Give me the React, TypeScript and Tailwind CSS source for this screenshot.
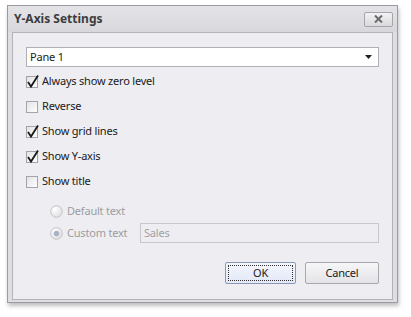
import React from "react";

const font = { fontFamily: '"Noto Sans", "Open Sans", Arial, sans-serif' };

const CheckBox: React.FC<{ checked?: boolean }> = ({ checked }) => (
  <svg width="14" height="16" viewBox="0 0 14 16" className="shrink-0 overflow-visible">
    <defs>
      <linearGradient id="cbg" x1="0" y1="0" x2="1" y2="1">
        <stop offset="0" stopColor="#e2e2e4" />
        <stop offset="1" stopColor="#ffffff" />
      </linearGradient>
    </defs>
    <rect x="0.5" y="2.5" width="11" height="11" fill="url(#cbg)" stroke="#a4a4a8" />
    {checked && (
      <path d="M2 8 L5 12.5 L12 1.5" fill="none" stroke="#1a1a1a" strokeWidth="1.8" strokeLinejoin="miter" />
    )}
  </svg>
);

const Radio: React.FC<{ checked?: boolean }> = ({ checked }) => (
  <svg width="13" height="13" viewBox="0 0 13 13" className="shrink-0">
    <defs>
      <radialGradient id="rbg" cx="0.35" cy="0.3" r="0.8">
        <stop offset="0" stopColor="#ffffff" />
        <stop offset="1" stopColor="#dcdce0" />
      </radialGradient>
    </defs>
    <circle cx="6.5" cy="6.5" r="5.8" fill="url(#rbg)" stroke="#c4c4c8" strokeWidth="1" />
    {checked && <circle cx="6.5" cy="6.5" r="2.8" fill="#a9b2c6" />}
  </svg>
);

const CheckRow: React.FC<{ label: string; checked?: boolean }> = ({ label, checked }) => (
  <div className="flex h-[25px] items-center gap-[2px] text-[11px] tracking-[-0.2px] text-[#202020]">
    <CheckBox checked={checked} />
    <span>{label}</span>
  </div>
);

export default function App() {
  return (
    <div className="h-[317px] w-[411px] bg-white pl-[7px] pt-[5px]" style={font}>
      <div className="flex h-[298px] w-[391px] flex-col border border-[#9c9ca0] bg-[#dedee2] shadow-[1px_3px_4px_rgba(0,0,0,0.25)]">
        <div className="flex h-[26px] items-center justify-between bg-gradient-to-b from-[#e4e4e8] to-[#d8d8dc] pl-[6px] pr-[4px]">
          <span className="text-[12px] font-bold text-[#3c3c40]">Y-Axis Settings</span>
          <div className="flex h-[15px] w-[29px] items-center justify-center rounded-[2px] border border-[#a6a6aa] bg-gradient-to-b from-[#f2f2f4] to-[#dadade]">
            <svg width="9" height="8" viewBox="0 0 9 8">
              <path d="M1 0.5 L8 7.5 M8 0.5 L1 7.5" stroke="#6a6a6e" strokeWidth="2" />
            </svg>
          </div>
        </div>
        <div className="mx-[4px] mb-[2px] flex flex-1 flex-col border border-[#b4b4b8] bg-[#eeeef2] px-[13px] pt-[14px] text-[11px] tracking-[-0.2px]">
          <div className="flex h-[20px] items-center justify-between border border-[#b0b0b4] bg-white pl-[3px] pr-[6px] text-[#202020]">
            <span>Pane 1</span>
            <svg width="7" height="4" viewBox="0 0 7 4">
              <path d="M0 0 H7 L3.5 4 Z" fill="#202020" />
            </svg>
          </div>
          <div className="mt-[2px] flex flex-col">
            <CheckRow label="Always show zero level" checked />
            <CheckRow label="Reverse" />
            <CheckRow label="Show grid lines" checked />
            <CheckRow label="Show Y-axis" checked />
            <CheckRow label="Show title" />
          </div>
          <div className="ml-[24px] mt-[7px] flex flex-col gap-[2px] text-[#9c9ca0]">
            <div className="flex h-[20px] items-center gap-[4px]">
              <Radio />
              <span>Default text</span>
            </div>
            <div className="flex h-[20px] items-center">
              <div className="flex w-[90px] items-center gap-[4px]">
                <Radio checked />
                <span>Custom text</span>
              </div>
              <div className="flex h-[20px] flex-1 items-center border border-[#c8c8cc] bg-[#eeeef2] pl-[3px] text-[#a0a0a4]">
                Sales
              </div>
            </div>
          </div>
          <div className="mt-[19px] flex justify-end gap-[9px] text-[#202020]">
            <div className="flex h-[22px] w-[71px] items-center justify-center rounded-[2px] border border-[#8896b8] bg-gradient-to-b from-[#f4f6fc] to-[#e2e8f8] p-[2px]">
              <div className="flex h-full w-full items-center justify-center border border-dotted border-[#303030]">
                OK
              </div>
            </div>
            <div className="flex h-[22px] w-[74px] items-center justify-center rounded-[2px] border border-[#a8a8ac] bg-gradient-to-b from-[#f6f6f8] to-[#e4e4e8]">
              Cancel
            </div>
          </div>
        </div>
      </div>
    </div>
  );
}
